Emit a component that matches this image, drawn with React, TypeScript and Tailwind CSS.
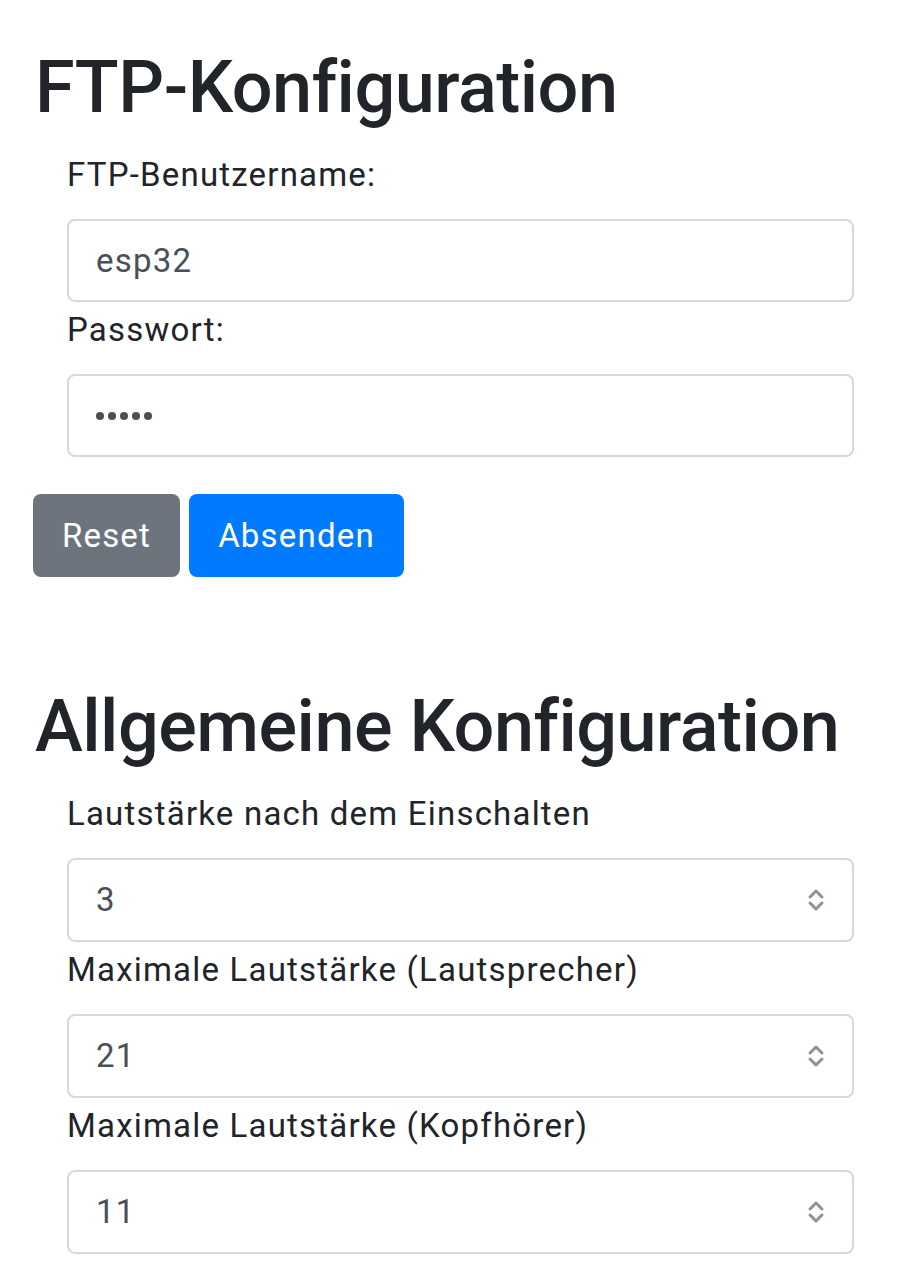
import React from 'react';

const Chevrons = () => (
    <svg width="20" height="28" viewBox="0 0 20 28" fill="none" className="shrink-0">
        <path d="M4 11 L10 5 L16 11" stroke="#8e9199" strokeWidth="3" strokeLinecap="round" strokeLinejoin="round" />
        <path d="M4 17 L10 23 L16 17" stroke="#8e9199" strokeWidth="3" strokeLinecap="round" strokeLinejoin="round" />
    </svg>
);

const Dots = () => (
    <div className="flex gap-[4px]">
        {[0, 1, 2, 3, 4].map((i) => (
            <span key={i} className="block w-[8px] h-[8px] rounded-full bg-[#495057]" />
        ))}
    </div>
);

const Field = ({ label, value, first, select, password }: { label: string; value: string; first?: boolean; select?: boolean; password?: boolean }) => (
    <div>
        <label className={`block text-[33px] tracking-[1.2px] leading-[42px] text-[#212529] mb-[23px] ${first ? 'mt-[25px]' : 'mt-[7px]'}`}>
            {label}
        </label>
        <div className={`${select ? 'h-[84px]' : 'h-[83px]'} border-2 border-[#d5d9dd] rounded-[8px] bg-white flex items-center justify-between pl-[27px] pr-[26px]`}>
            {password ? <Dots /> : <span className="text-[33px] tracking-[1.2px] text-[#495057]">{value}</span>}
            {select && <Chevrons />}
        </div>
    </div>
);

const App = () => {
    return (
        <div className="bg-white min-h-[1280px] font-['Roboto',sans-serif]">
            <div className="px-[35px]">
                <h1 className="text-[72px] tracking-[-0.5px] font-medium leading-[82px] text-[#212529] pt-[47px]">FTP-Konfiguration</h1>
            </div>
            <form className="px-[67px]">
                <Field label="FTP-Benutzername:" value="esp32" first />
                <Field label="Passwort:" value="" password />
            </form>
            <div className="px-[33px] mt-[37px] flex gap-[9px]">
                <button className="h-[83px] w-[147px] rounded-[8px] bg-[#6c757d] text-white text-[33px] tracking-[1.2px]">Reset</button>
                <button className="h-[83px] w-[215px] rounded-[8px] bg-[#007bff] text-white text-[33px] tracking-[1.2px]">Absenden</button>
            </div>
            <div className="px-[35px] mt-[109px]">
                <h2 className="text-[72px] tracking-[-0.5px] font-medium leading-[82px] text-[#212529]">Allgemeine Konfiguration</h2>
            </div>
            <div className="px-[67px]">
                <Field label="Lautstärke nach dem Einschalten" value="3" first select />
                <Field label="Maximale Lautstärke (Lautsprecher)" value="21" select />
                <Field label="Maximale Lautstärke (Kopfhörer)" value="11" select />
            </div>
        </div>
    );
};

export default App;
